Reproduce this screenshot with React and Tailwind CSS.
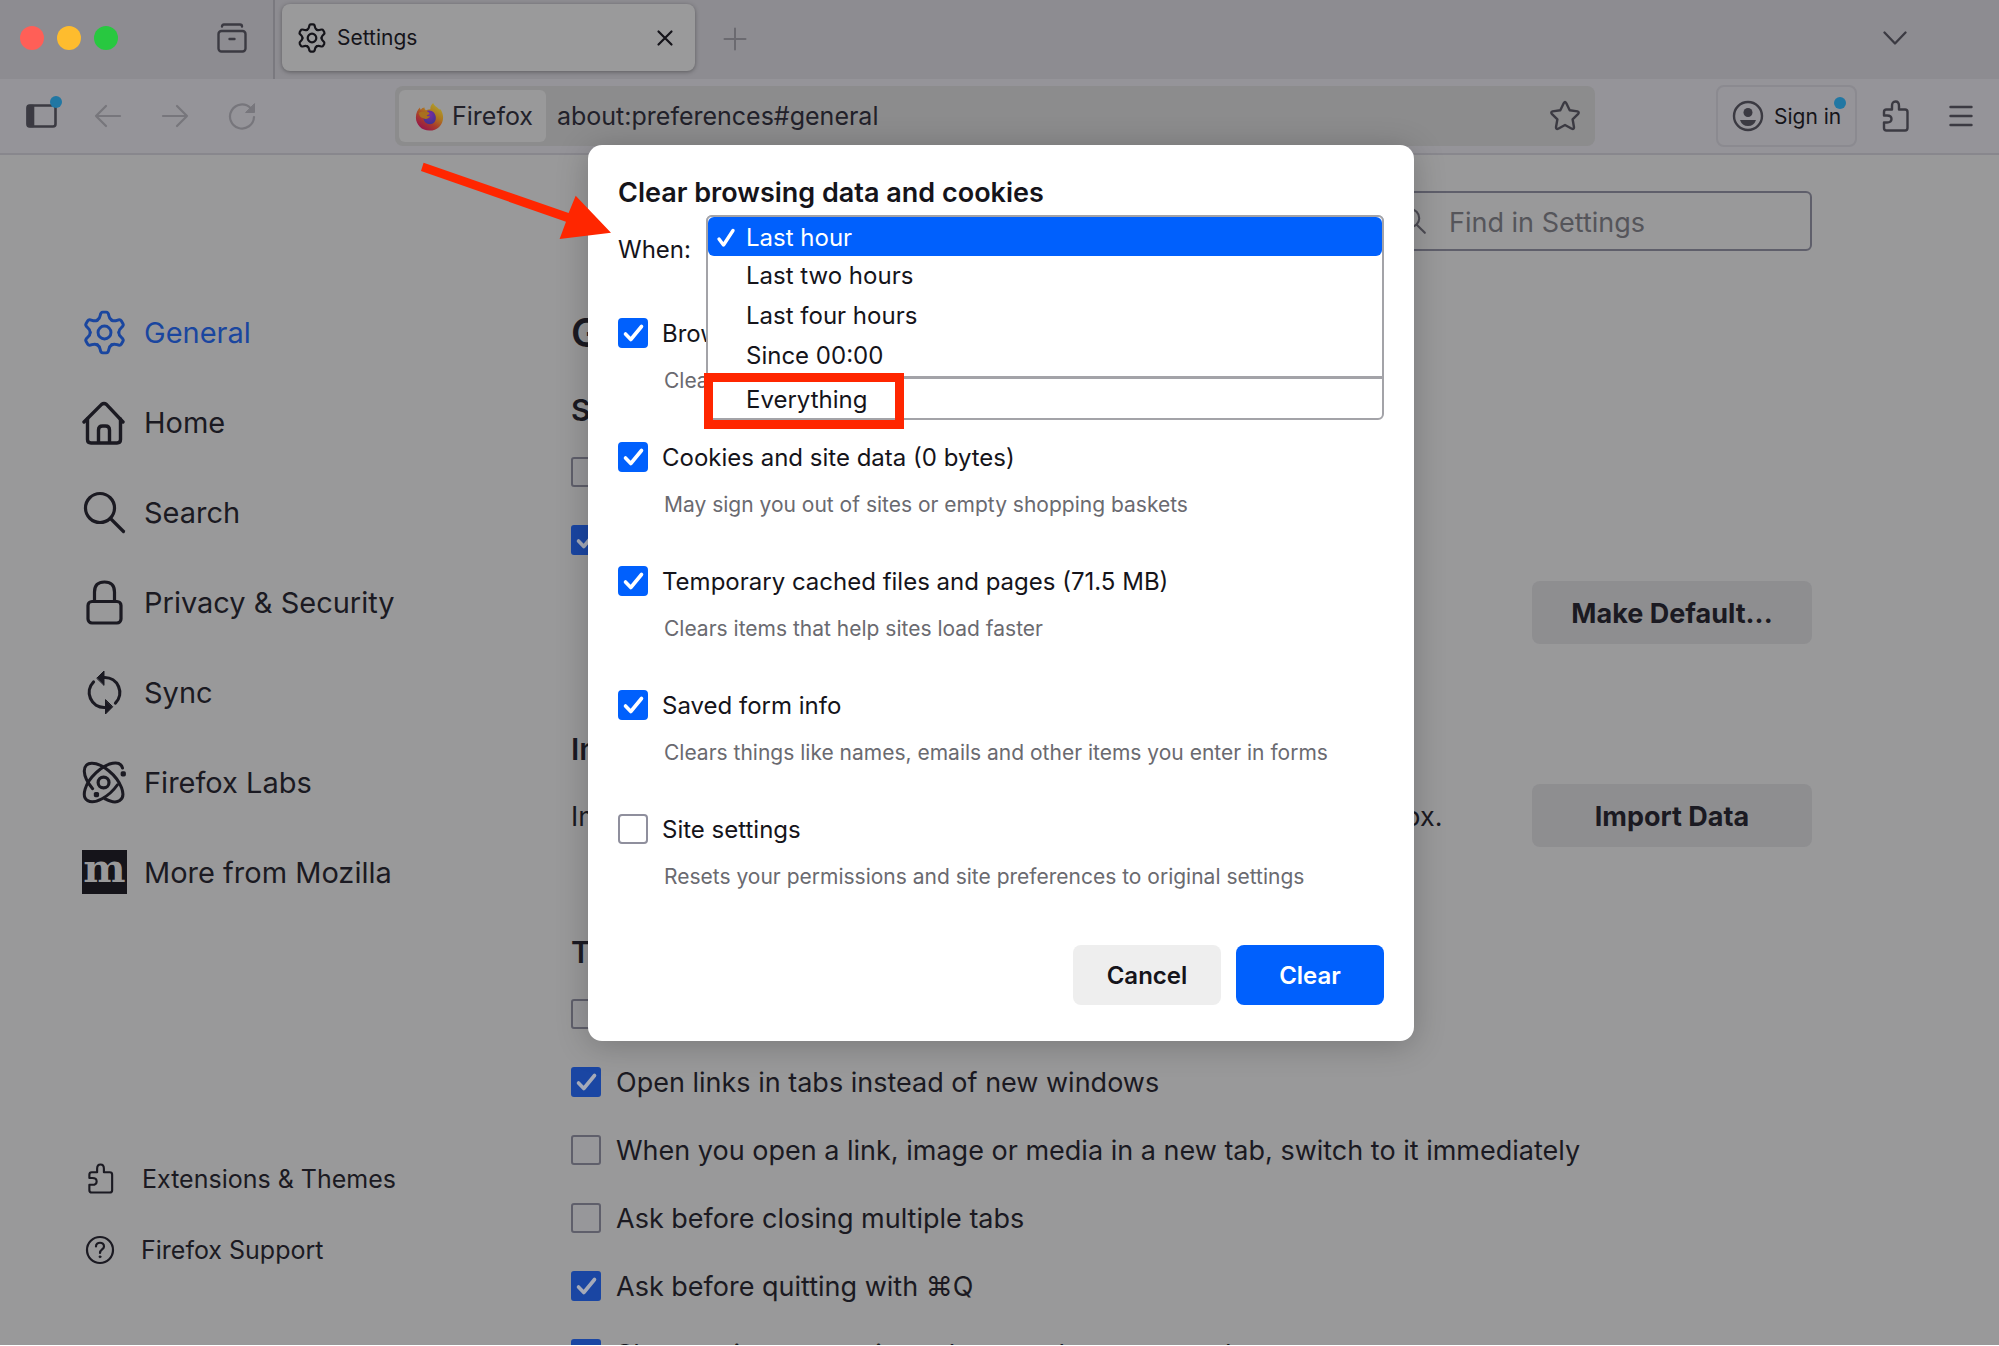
import React, { useState } from "react";

const stroke = {
  fill: "none",
  stroke: "currentColor",
  strokeLinecap: "round",
  strokeLinejoin: "round",
};

const TOOTH =
  "M-3.65-6.32C-2.78-6.82-2.4-7.4-2.2-8.7C-2-10-1.7-10.4-.9-10.4H.9C1.7-10.4 2-10 2.2-8.7C2.4-7.4 2.78-6.82 3.65-6.32";

function GearIcon({ className, width = 1.5 }) {
  return (
    <svg viewBox="-11.5 -11.5 23 23" className={className} {...stroke} strokeWidth={width} aria-hidden="true">
      {[0, 60, 120, 180, 240, 300].map((a) => (
        <path key={a} d={TOOTH} transform={`rotate(${a})`} />
      ))}
      <circle r="3.3" />
    </svg>
  );
}

function HomeIcon({ className }) {
  return (
    <svg viewBox="0 0 45 45" className={className} {...stroke} strokeWidth="3.4" aria-hidden="true">
      <path d="M2 22 19.6 4.4Q22 2.4 24.4 4.4L41 22" />
      <path d="M5.5 19V39.5Q5.5 43 9 43H35Q38.500 43 38.500 39.500V19" />
      <path d="M16.500 42V30Q16.500 26 20.500 26H23.500Q27.500 26 27.500 30V42" />
    </svg>
  );
}

function SearchIcon({ className, width = 3.2 }) {
  return (
    <svg viewBox="0 0 45 45" className={className} {...stroke} strokeWidth={width} aria-hidden="true">
      <circle cx="18" cy="18" r="14.500" />
      <path d="M28.500 28.500 41.500 41.500" />
    </svg>
  );
}

function LockIcon({ className }) {
  return (
    <svg viewBox="0 0 45 45" className={className} {...stroke} strokeWidth="3.2" aria-hidden="true">
      <path d="M12.500 21V12Q12.500 2 22.500 2T32.500 12V21" />
      <rect x="6" y="21.500" width="33" height="21.500" rx="4" />
    </svg>
  );
}

function SyncIcon({ className }) {
  return (
    <svg viewBox="0 0 45 45" className={className} {...stroke} strokeWidth="3.2" aria-hidden="true">
      <path d="M22.500 7.500A15 15 0 0 1 33.500 33" />
      <path d="M22.500 37.500A15 15 0 0 1 11.500 12" />
      <path d="M15 8 22 1V15Z" fill="currentColor" strokeWidth="1" />
      <path d="M30.500 37 23.500 44V30Z" fill="currentColor" strokeWidth="1" />
    </svg>
  );
}

function LabsIcon({ className }) {
  return (
    <svg viewBox="-11.500 -12 24 24" className={className} {...stroke} strokeWidth="1.600" aria-hidden="true">
      <g transform="rotate(-45)">
        <path d="M4.400 6.100A13 6.500 0 1 1 12.600 1.700" />
      </g>
      <g transform="rotate(45)">
        <path d="M-1.800 6.440A13 6.500 0 1 1 6.500 5.630" />
      </g>
      <circle r="2.900" strokeWidth="1.700" />
      <rect x="9.100" y="-6" width="2.800" height="2.800" rx=".9" fill="currentColor" stroke="none" />
      <rect x="-5.200" y="5" width="2.800" height="2.800" rx=".9" fill="currentColor" stroke="none" />
    </svg>
  );
}

function MozillaIcon() {
  return (
    <span
      aria-hidden="true"
      className="flex h-11 w-[45px] shrink-0 items-center justify-center bg-[#15141a] pb-2 font-['DejaVu_Serif'] text-[40px] leading-none font-bold text-[#99999a]"
    >
      m
    </span>
  );
}

function PuzzleIcon({ className, width = 2.4 }) {
  return (
    <svg viewBox="0 0 30 32" className={className} {...stroke} strokeWidth={width} aria-hidden="true">
      <path d="M11 9.500V6Q11 1.500 14.500 1.500T18 6V9.500H24Q26.500 9.500 26.500 12V28Q26.500 30.500 24 30.500H5.500Q3 30.500 3 28V22.500H6Q10.500 22.500 10.500 19T6 15.500H3V12Q3 9.500 5.500 9.500Z" />
    </svg>
  );
}

function HelpIcon({ className }) {
  return (
    <svg viewBox="0 0 30 30" className={className} {...stroke} strokeWidth="2.200" aria-hidden="true">
      <circle cx="15" cy="15" r="13" />
      <path d="M11 11.500C11 6.500 19 6.500 19 11.500C19 14.500 15 14.500 15 18" />
      <circle cx="15" cy="21.800" r="1" fill="currentColor" strokeWidth=".8" />
    </svg>
  );
}

function FirefoxLogo({ className }) {
  return (
    <svg viewBox="0 0 32 32" className={className} aria-hidden="true">
      <defs>
        <linearGradient id="flame" x1="0.85" y1="0.1" x2="0.25" y2="1">
          <stop offset="0" stopColor="#b0a02c" />
          <stop offset="0.35" stopColor="#ad761f" />
          <stop offset="0.65" stopColor="#a83b2c" />
          <stop offset="1" stopColor="#94114f" />
        </linearGradient>
        <radialGradient id="globe" cx="0.5" cy="0.3" r="0.8">
          <stop offset="0" stopColor="#7a2ba0" />
          <stop offset="1" stopColor="#37348f" />
        </radialGradient>
      </defs>
      <path
        d="M20 1C21 4 24 5 26.500 8Q27.500 9 27.500 7.500C30 10 31 14 31 17C31 25.500 24.500 31.500 16 31.500S1 25 1 17C1 12 3 8 5.500 6Q5.500 8 6.500 8.500C7.500 7 9 6 10.500 6Q10 8 12 9Q15 8 17 8Q16.500 4 20 1Z"
        fill="url(#flame)"
      />
      <path d="M13 10C18 8 23 12 23 17.500C23 22 20 24.500 16.500 24.500C12.500 24.500 9.500 21.500 9.500 18C12 19 15.500 18 16.500 16Q13 16 12.500 14.500Q15.500 13.500 16 12.500Z" fill="url(#globe)" />
      <path d="M4 12Q9 9.500 12.500 11.500Q15 11 16 12.500Q15.500 14 13 14.500Q13 16 16.500 16Q13.500 20 9.500 18Q5 17 4 12Z" fill="#a8701f" />
    </svg>
  );
}

function CheckBox({ id, defaultChecked, dim }) {
  return (
    <span className="grid shrink-0 place-items-center">
      <input
        id={id}
        type="checkbox"
        defaultChecked={defaultChecked}
        className={
          dim
            ? "peer col-start-1 row-start-1 h-[30px] w-[30px] appearance-none rounded-[3px] border-2 border-[#5f5f6b] bg-[#97979a] checked:border-[#1a46a3] checked:bg-[#1a46a3]"
            : "peer col-start-1 row-start-1 h-[30px] w-[30px] appearance-none rounded-[4px] border-2 border-[#8f8f9d] bg-white checked:border-[#0060fd] checked:bg-[#0060fd]"
        }
      />
      <svg
        viewBox="0 0 30 30"
        {...stroke}
        strokeWidth="3.600"
        aria-hidden="true"
        className={
          dim
            ? "pointer-events-none invisible col-start-1 row-start-1 h-[30px] w-[30px] text-[#a5aab8] peer-checked:visible"
            : "pointer-events-none invisible col-start-1 row-start-1 h-[30px] w-[30px] text-white peer-checked:visible"
        }
      >
        <path d="M7.500 16 12.800 21.500 23.500 8.500" />
      </svg>
    </span>
  );
}

function PrefRow({ id, label, checked }) {
  return (
    <div className="flex h-[68px] items-center gap-[15px]">
      <CheckBox id={id} defaultChecked={checked} dim />
      <label htmlFor={id} className="pt-0.5 whitespace-nowrap">
        {label}
      </label>
    </div>
  );
}

const NAV = [
  { label: "General", icon: <GearIcon className="h-[45px] w-[45px]" />, active: true },
  { label: "Home", icon: <HomeIcon className="h-[45px] w-[45px]" /> },
  { label: "Search", icon: <SearchIcon className="h-[45px] w-[45px]" /> },
  { label: "Privacy & Security", icon: <LockIcon className="h-[45px] w-[45px]" /> },
  { label: "Sync", icon: <SyncIcon className="h-[45px] w-[45px]" /> },
  { label: "Firefox Labs", icon: <LabsIcon className="h-[45px] w-[45px]" /> },
  { label: "More from Mozilla", icon: <MozillaIcon /> },
];

const TAB_PREFS = [
  { id: "ctrl-tab", label: "Ctrl+Tab cycles through tabs in recently used order" },
  { id: "open-links", label: "Open links in tabs instead of new windows", checked: true },
  { id: "switch-to", label: "When you open a link, image or media in a new tab, switch to it immediately" },
  { id: "ask-close", label: "Ask before closing multiple tabs" },
  { id: "ask-quit", label: "Ask before quitting with ⌘Q", checked: true },
  { id: "preview", label: "Show an image preview when you hover on a tab", checked: true },
];

const CLEAR_ITEMS = [
  { id: "history", label: "Browsing & download history", note: "Clears site and download history, saved form info and searches", checked: true },
  { id: "cookies", label: "Cookies and site data (0 bytes)", note: "May sign you out of sites or empty shopping baskets", checked: true },
  { id: "cache", label: "Temporary cached files and pages (71.5 MB)", note: "Clears items that help sites load faster", checked: true },
  { id: "forms", label: "Saved form info", note: "Clears things like names, emails and other items you enter in forms", checked: true },
  { id: "site", label: "Site settings", note: "Resets your permissions and site preferences to original settings" },
];

const RANGES = ["Last hour", "Last two hours", "Last four hours", "Since 00:00"];

function TitleBar() {
  return (
    <header className="flex h-[79px] shrink-0 bg-[#8d8c91] text-[#3b3a42]">
      <div className="flex w-[275px] items-center border-r-2 border-[#7a797f] pb-1 pl-5">
        <div className="flex gap-[13px]">
          <button aria-label="Close" className="h-6 w-6 rounded-full bg-[#ff5f57]" />
          <button aria-label="Minimise" className="h-6 w-6 rounded-full bg-[#febc2e]" />
          <button aria-label="Zoom" className="h-6 w-6 rounded-full bg-[#28c840]" />
        </div>
        <button aria-label="Recent browsing" className="ml-[98px]">
          <svg viewBox="0 0 32 32" className="h-8 w-8" {...stroke} strokeWidth="2.400" aria-hidden="true">
            <path d="M6 4.500Q6 2.500 8 2.500H24Q26 2.500 26 4.500" />
            <rect x="2.500" y="9" width="27" height="20.500" rx="3" />
            <path d="M13.500 17H18.500" />
          </svg>
        </button>
      </div>
      <div className="mt-1 ml-[7px] flex h-[67px] w-[413px] items-center self-start rounded-lg bg-[#9a9a9b] pr-5 pl-[15px] text-[#15141a] shadow-[0_1px_4px_rgba(0,0,0,0.35)]">
        <GearIcon className="h-[30px] w-[30px]" width={1.7} />
        <span className="ml-[10px] pt-0.5 text-[21px]">Settings</span>
        <button aria-label="Close tab" className="ml-auto">
          <svg viewBox="0 0 20 20" className="h-5 w-5" {...stroke} strokeWidth="2.200" aria-hidden="true">
            <path d="M3.500 3.500 16.500 16.500M16.500 3.500 3.500 16.500" />
          </svg>
        </button>
      </div>
      <button aria-label="New tab" className="ml-7 pb-0.5 text-[#6b6a70]">
        <svg viewBox="0 0 24 24" className="h-6 w-6" {...stroke} strokeWidth="2" aria-hidden="true">
          <path d="M12 1.500V22.500M1.500 12H22.500" />
        </svg>
      </button>
      <button aria-label="List all tabs" className="mr-[92px] ml-auto pb-1">
        <svg viewBox="0 0 24 24" className="h-6 w-6" {...stroke} strokeWidth="2.300" aria-hidden="true">
          <path d="M1.500 6.500 12 17.500 22.500 6.500" />
        </svg>
      </button>
    </header>
  );
}

function ToolBar() {
  return (
    <div className="flex h-[76px] shrink-0 items-center border-b-2 border-[#88878d] bg-[#959499] text-[#3b3a42]">
      <button aria-label="Sidebars" className="relative ml-[26px]">
        <svg viewBox="0 0 31 24" className="h-6 w-[31px]" {...stroke} strokeWidth="2.600" aria-hidden="true">
          <rect x="1.500" y="1.500" width="28" height="21" rx="2.500" />
          <path d="M2 2H7V22H2Z" fill="currentColor" />
        </svg>
        <span className="absolute -top-2 -right-[5px] h-3 w-3 rounded-full bg-[#2177a3]" />
      </button>
      <div className="ml-[37px] flex items-center gap-[39px] text-[#77767c]">
        <button aria-label="Back">
          <svg viewBox="0 0 28 28" className="h-7 w-7" {...stroke} strokeWidth="2.200" aria-hidden="true">
            <path d="M26 14H2M12 4 2 14 12 24" />
          </svg>
        </button>
        <button aria-label="Forward">
          <svg viewBox="0 0 28 28" className="h-7 w-7" {...stroke} strokeWidth="2.200" aria-hidden="true">
            <path d="M2 14H26M16 4 26 14 16 24" />
          </svg>
        </button>
        <button aria-label="Reload">
          <svg viewBox="0 0 28 28" className="h-7 w-7" {...stroke} strokeWidth="2.200" aria-hidden="true">
            <path d="M26 15A12 12 0 1 1 22.500 6" />
            <path d="M26.500 2V10.500H18Z" fill="currentColor" strokeWidth="1" />
          </svg>
        </button>
      </div>
      <div className="ml-[139px] flex h-[60px] flex-1 items-center rounded-lg bg-[#8c8c8d] p-1">
        <button className="flex h-[52px] w-[147px] items-center gap-2 rounded-md bg-[#99999a] pl-4 text-[25px] text-[#22212a]">
          <FirefoxLogo className="h-[29px] w-[29px] shrink-0" />
          <span className="pt-0.5">Firefox</span>
        </button>
        <input
          aria-label="Address"
          defaultValue="about:preferences#general"
          className="ml-[11px] min-w-0 flex-1 bg-transparent pt-0.5 text-[25px] text-[#22212a] outline-none"
        />
        <button aria-label="Bookmark" className="mr-[10px]">
          <svg viewBox="0 0 32 32" className="h-8 w-8" {...stroke} strokeWidth="2.400" aria-hidden="true">
            <path d="M14.800 3Q16 1 17.200 3L20.700 10.300 28.500 11.400Q30.500 12 29.200 13.800L23.600 19.300 25 27.200Q25 29.600 22.800 28.700L16 25 9.200 28.700Q7 29.600 7 27.200L8.400 19.300 2.800 13.800Q1.500 12 3.500 11.400L11.300 10.300Z" />
          </svg>
        </button>
      </div>
      <button className="relative ml-[121px] flex h-[62px] w-[141px] items-center rounded-lg border-2 border-[#8b8a90] pl-[14px]">
        <svg viewBox="0 0 32 32" className="h-8 w-8 shrink-0" aria-hidden="true">
          <circle cx="16" cy="16" r="14" fill="none" stroke="currentColor" strokeWidth="2.400" />
          <circle cx="16" cy="12.500" r="4.500" fill="currentColor" />
          <path d="M8 20H24Q22 26 16 26T8 20Z" fill="currentColor" />
        </svg>
        <span className="ml-[10px] pt-0.5 text-[21px] whitespace-nowrap text-[#15141a]">Sign in</span>
        <span className="absolute top-[10px] right-[9px] h-3 w-3 rounded-full bg-[#2177a3]" />
      </button>
      <button aria-label="Extensions" className="ml-6">
        <PuzzleIcon className="h-8 w-[30px]" />
      </button>
      <button aria-label="Menu" className="mr-[26px] ml-[38px]">
        <svg viewBox="0 0 24 22" className="h-[22px] w-6" {...stroke} strokeWidth="2.400" aria-hidden="true">
          <path d="M1.500 2H22.500M1.500 11H22.500M1.500 20H22.500" />
        </svg>
      </button>
    </div>
  );
}

function SideNav() {
  return (
    <aside className="flex w-[571px] shrink-0 flex-col pt-[132px] pb-[60px] pl-[82px]">
      <nav>
        {NAV.map((item) => (
          <a
            key={item.label}
            href="#general"
            className={
              item.active
                ? "flex h-[90px] items-center gap-[17px] text-[29px] text-[#1a469f]"
                : "flex h-[90px] items-center gap-[17px] text-[29px] text-[#1b1a22]"
            }
          >
            {item.icon}
            <span className="pt-0.5">{item.label}</span>
          </a>
        ))}
      </nav>
      <div className="mt-auto text-[25px]">
        <a href="#extensions" className="flex h-[71px] items-center gap-[26px] pl-1">
          <PuzzleIcon className="h-[31px] w-[30px]" width={2.2} />
          <span className="pt-0.5">Extensions &amp; Themes</span>
        </a>
        <a href="#support" className="flex h-[71px] items-center gap-[26px] pl-[3px]">
          <HelpIcon className="h-[30px] w-[30px]" />
          <span className="pt-0.5">Firefox Support</span>
        </a>
      </div>
    </aside>
  );
}

function Preferences() {
  return (
    <main className="max-w-[1241px] flex-1 pt-[36px] text-[27px]">
      <div className="ml-auto flex h-[60px] w-[430px] items-center gap-[22px] rounded-md border-2 border-[#5f5f6b] pl-[15px]">
        <SearchIcon className="h-7 w-7 shrink-0 text-[#4c4b53]" width={3.4} />
        <input
          aria-label="Find in Settings"
          placeholder="Find in Settings"
          className="min-w-0 flex-1 bg-transparent pt-1 outline-none placeholder:text-[#55555a]"
        />
      </div>
      <h1 className="mt-[43px] flex h-[78px] items-center text-[40px] font-semibold">General</h1>
      <h2 className="mt-3 flex h-[54px] items-center text-[30px] font-semibold">Startup</h2>
      <PrefRow id="previous" label="Open previous windows and tabs" />
      <PrefRow id="default-check" label="Always check if Firefox is your default browser" checked />
      <div className="flex h-[77px] items-center justify-end">
        <button className="h-[63px] w-[280px] rounded-lg bg-[#8e8e90] pt-0.5 text-[27px] font-bold">Make Default...</button>
      </div>
      <h2 className="mt-[72px] flex h-[54px] items-center text-[30px] font-semibold">Import Browser Data</h2>
      <div className="flex h-[77px] items-center justify-between">
        <p className="pt-0.5 whitespace-nowrap">Import bookmarks, passwords, history and auto-fill data into Firefox.</p>
        <button className="h-[63px] w-[280px] rounded-lg bg-[#8e8e90] pt-0.5 text-[27px] font-bold">Import Data</button>
      </div>
      <h2 className="mt-[72px] flex h-[54px] items-center text-[30px] font-semibold">Tabs</h2>
      {TAB_PREFS.map((p) => (
        <PrefRow key={p.id} {...p} />
      ))}
    </main>
  );
}

function RangePicker() {
  const [range, setRange] = useState("Last hour");
  return (
    <div className="relative flex-1">
      <select
        id="range"
        value={range}
        onChange={(e) => setRange(e.target.value)}
        className="h-[58px] w-full appearance-none rounded-md border-2 border-[#b4b4ba] bg-white pl-9"
      >
        {[...RANGES, "Everything"].map((r) => (
          <option key={r}>{r}</option>
        ))}
      </select>
      <ul
        role="listbox"
        aria-label="Time range"
        className="absolute inset-x-0 top-0 z-10 rounded-md border-2 border-[#a3a3a8] bg-white"
      >
        {RANGES.map((r) => (
          <li
            key={r}
            role="option"
            aria-selected={r === range}
            onClick={() => setRange(r)}
            className={
              r === range
                ? "flex h-[39px] items-center rounded-md bg-[#0060fd] pt-0.5 pl-2 text-white"
                : "flex h-10 items-center pl-2"
            }
          >
            <svg
              viewBox="0 0 20 22"
              {...stroke}
              strokeWidth="3.400"
              aria-hidden="true"
              className={r === range ? "mr-[10px] h-[22px] w-5" : "invisible mr-[10px] h-[22px] w-5"}
            >
              <path d="M3 12 7.500 18 17 3.500" />
            </svg>
            {r}
          </li>
        ))}
        <li
          role="option"
          aria-selected={range === "Everything"}
          onClick={() => setRange("Everything")}
          className="relative flex h-[42px] items-center border-t-3 border-[#a3a3a8] pt-0.5 pl-[38px]"
        >
          Everything
          <span className="pointer-events-none absolute -top-[6px] -left-[4px] h-14 w-[200px] border-9 border-[#ff2600]" />
        </li>
      </ul>
    </div>
  );
}

function ClearDialog() {
  return (
    <div className="absolute inset-x-0 top-[145px] flex justify-center pl-[3px]">
      <section
        role="dialog"
        aria-labelledby="clear-title"
        className="relative w-[826px] rounded-[14px] bg-white px-[30px] pt-[26px] pb-9 text-2xl text-[#15141a] shadow-[0_4px_32px_rgba(0,0,0,0.22)]"
      >
        <svg viewBox="0 0 192 80" className="absolute top-4 -left-[168px] h-20 w-48" aria-hidden="true">
          <path d="M3.600 1.700 148.600 52 155.700 34.700 191 71.700 139.600 78 146 60.700 1 10Z" fill="#ff2600" />
        </svg>
        <h2 id="clear-title" className="flex h-11 items-center text-[27px] font-semibold">
          Clear browsing data and cookies
        </h2>
        <div className="flex items-start">
          <label htmlFor="range" className="flex h-[70px] w-[88px] items-center">
            When:
          </label>
          <RangePicker />
        </div>
        <div className="mt-[18px]">
          {CLEAR_ITEMS.map((item) => (
            <div key={item.id} className="h-[124px]">
              <div className="flex h-[60px] items-center gap-[14px]">
                <CheckBox id={item.id} defaultChecked={item.checked} />
                <label htmlFor={item.id} className="pt-0.5 whitespace-nowrap">
                  {item.label}
                </label>
              </div>
              <p className="flex h-8 items-center pt-[3px] pl-[46px] text-[21px] whitespace-nowrap text-[#6a6a70]">{item.note}</p>
            </div>
          ))}
        </div>
        <div className="mt-[22px] flex justify-end gap-[15px] font-semibold">
          <button className="h-[60px] w-[148px] rounded-lg bg-[#eeeeee] pt-0.5">Cancel</button>
          <button className="h-[60px] w-[148px] rounded-lg bg-[#0060fd] pt-0.5 text-white">Clear</button>
        </div>
      </section>
    </div>
  );
}

export default function App() {
  return (
    <div className="relative flex h-screen flex-col overflow-hidden border-b border-white bg-[#99999a] font-['Inter',sans-serif] leading-tight text-[#1b1a22]">
      <TitleBar />
      <ToolBar />
      <div className="flex min-h-0 flex-1">
        <SideNav />
        <Preferences />
      </div>
      <ClearDialog />
    </div>
  );
}
